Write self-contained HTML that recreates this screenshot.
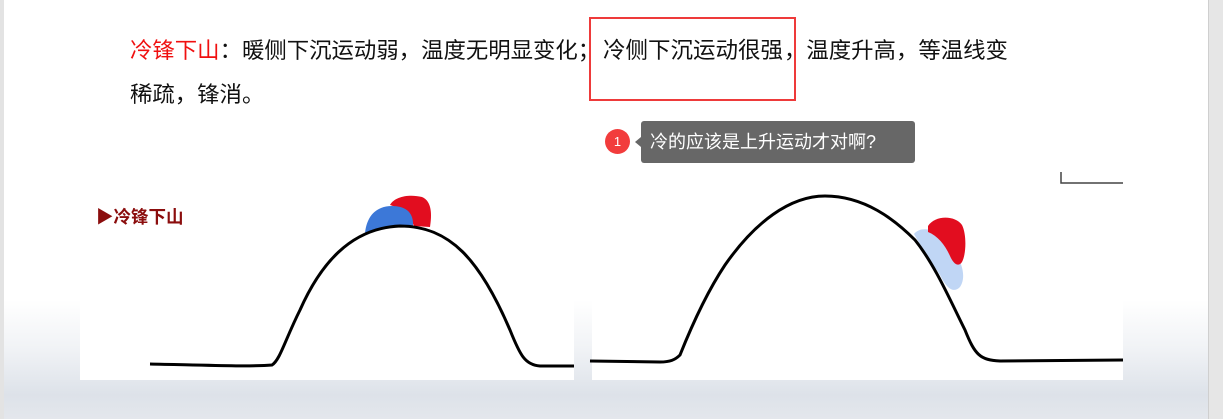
<!DOCTYPE html>
<html><head><meta charset="utf-8"><style>
body{margin:0;width:1223px;height:419px;overflow:hidden;position:relative;background:#fff;font-family:"Liberation Sans","Noto Sans CJK SC",sans-serif}
.abs{position:absolute}
.txt{font-size:22.4px;color:#111;white-space:nowrap;line-height:1}
</style></head><body>
<div class="abs" style="left:0;top:300px;width:1210px;height:119px;background:linear-gradient(180deg,#fff 0%,#f1f3f6 40%,#dde2e9 80%,#e4e7ec 100%)"></div>
<div class="abs" style="left:0;top:0;width:4px;height:419px;background:#e3e3e3"></div>
<div class="abs" style="left:1208px;top:0;width:15px;height:419px;background:#e6e6e6;border-left:1px solid #cfcfcf"></div>
<div class="abs txt" style="left:130px;top:40px"><span style="color:#f01010">冷锋下山</span>：暖侧下沉运动弱，温度无明显变化；</div>
<div class="abs txt" style="left:603px;top:40px;font-size:22.5px">冷侧下沉运动很强</div>
<div class="abs txt" style="left:784px;top:40px;font-size:22.4px">，温度升高，等温线变</div>
<div class="abs txt" style="left:130px;top:84px;font-size:22.4px">稀疏，锋消。</div>
<div class="abs" style="left:589px;top:17px;width:203px;height:80px;border:2px solid #ee3a3a"></div>
<div class="abs" style="left:605px;top:129px;width:25px;height:25px;border-radius:50%;background:#f23c3c;color:#fff;font-size:13px;text-align:center;line-height:25px">1</div>
<div class="abs" style="left:635px;top:137px;width:0;height:0;border-top:5px solid transparent;border-bottom:5px solid transparent;border-right:6px solid #676767"></div>
<div class="abs" style="left:641px;top:121px;width:274px;height:42px;background:#676767;border-radius:3px;color:#fff;font-size:18px;line-height:42px;padding-left:9px;box-sizing:border-box">冷的应该是上升运动才对啊?</div>
<div class="abs" style="left:80px;top:180px;width:494px;height:200px;background:#fff"></div>
<div class="abs" style="left:592px;top:170px;width:531px;height:210px;background:#fff"></div>
<div class="abs" style="left:96px;top:204px;font-size:17.5px;font-weight:bold;color:#8b0d0d">▶冷锋下山</div>
<svg class="abs" style="left:0;top:0" width="1223" height="419">
<path d="M1061 172 V183 H1123" fill="none" stroke="#444" stroke-width="1.5"/>
<path d="M390 205 C395 196 410 194 422 197 C432 201 432 215 430 227 L414 226 C410 215 400 208 390 205Z" fill="#e20d1f"/>
<path d="M365 234 C366 220 373 206 392 206 C405 206 414 212 413 226 C398 227 380 228 365 234Z" fill="#3c78d8"/>
<path d="M150 364 C200 365 250 367 272 365 C280 360 285 340 300 310 C320 265 350 228 400 226 C450 226 480 260 510 330 C520 355 525 365 540 366 L574 366" fill="none" stroke="#000" stroke-width="3"/>
<path d="M914 234 C920 226 935 228 945 240 C960 255 968 275 960 287 C952 295 945 285 940 275 C930 260 920 245 914 234Z" fill="#c0d6f5"/>
<path d="M928 226 C935 215 955 215 962 225 C967 235 966 255 962 262 C958 268 953 263 950 256 C945 245 938 236 928 232Z" fill="#e20d1f"/>
<path d="M590 361 L660 362 C670 362 675 360 680 355 C690 330 705 295 725 265 C755 222 790 196 825 196 C865 196 895 220 915 240 C935 265 950 300 965 330 C975 355 980 360 1000 361 L1123 360" fill="none" stroke="#000" stroke-width="3"/>
</svg>
</body></html>
